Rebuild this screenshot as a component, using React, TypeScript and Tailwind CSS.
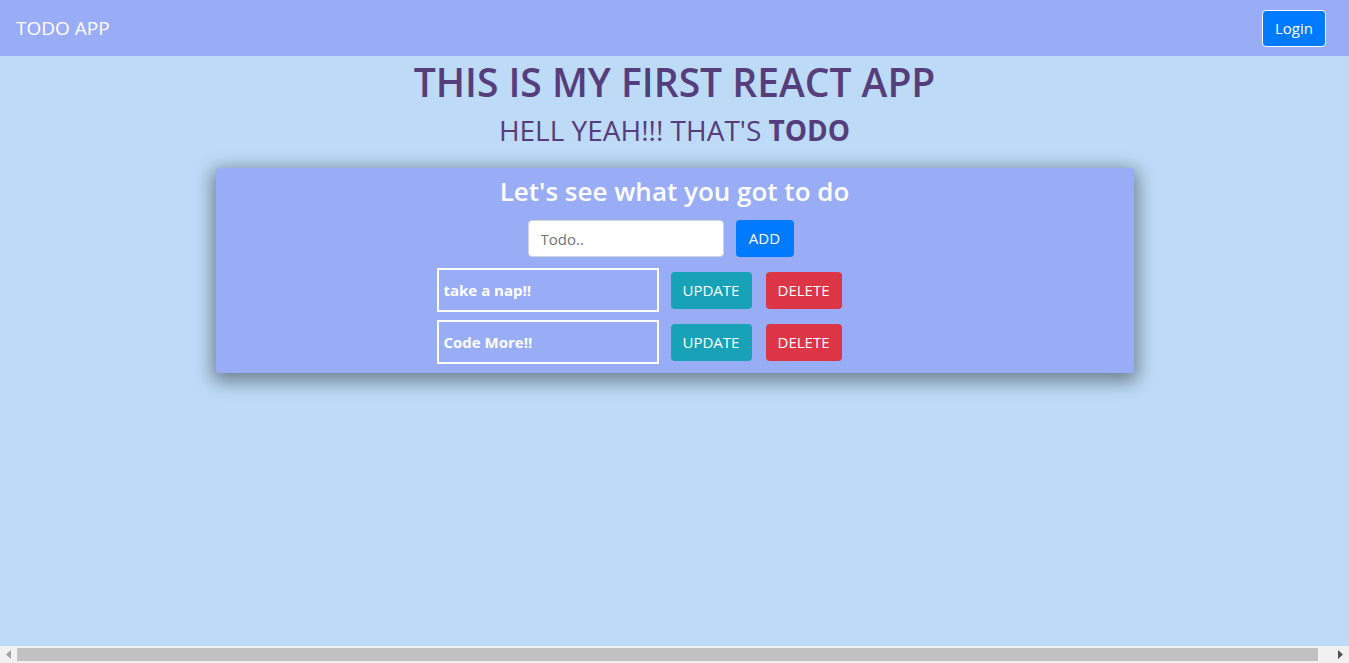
import { useState } from "react"

type Todo = { id: number; text: string }

export default function App() {
  const [todos] = useState<Todo[]>([
    { id: 1, text: "take a nap!!" },
    { id: 2, text: "Code More!!" },
  ])
  const [value, setValue] = useState("")

  return (
    <div className="h-screen flex flex-col bg-[#bddbf7] font-['Open_Sans',sans-serif] overflow-hidden">

      <nav className="h-[56px] bg-[#99adf7] flex items-center justify-between pl-4 pr-[23px] shrink-0">
        <span className="text-white text-[19px] leading-none">TODO APP</span>
        <button className="h-[37px] px-3 rounded border border-white bg-[#007bff] text-white text-[15px]">
          Login
        </button>
      </nav>

      <main className="flex-1 flex flex-col items-center">
        <h1 className="mt-[2px] text-[39px] leading-[48px] font-semibold text-[#563d7c]">
          THIS IS MY FIRST REACT APP
        </h1>
        <h3 className="mt-[7px] text-[28px] leading-[34px] font-normal text-[#563d7c]">
          HELL YEAH!!! THAT'S <b className="font-bold">TODO</b>
        </h3>

        <div className="mt-[21px] w-[918px] bg-[#99adf7] rounded-sm shadow-[0_5px_18px_4px_rgba(0,0,0,0.4)] pt-[5px] pb-[9px]">
          <h3 className="text-center text-white text-[26px] leading-[36px] font-semibold">
            Let's see what you got to do
          </h3>

          <div className="mt-[11px] flex justify-center gap-3">
            <input
              value={value}
              onChange={e => setValue(e.target.value)}
              placeholder="Todo.."
              className="w-[196px] h-[37px] rounded border border-[#ced4da] bg-white px-3 text-[15px] text-[#495057] placeholder:text-[#6c757d] outline-none"
            />
            <button className="w-[58px] h-[37px] rounded bg-[#007bff] text-white text-[15px] mr-[28px]">
              ADD
            </button>
          </div>

          <div className="mt-[11px] flex flex-col gap-2">
            {todos.map(todo => (
              <div key={todo.id} className="flex justify-center items-center">
                <div className="w-[222px] h-[44px] border-2 border-white flex items-center px-[5px] text-white text-[15px] font-bold">
                  {todo.text}
                </div>
                <button className="ml-3 w-[81px] h-[37px] rounded bg-[#17a2b8] text-white text-[15px]">
                  UPDATE
                </button>
                <button className="ml-[14px] mr-[71px] w-[76px] h-[37px] rounded bg-[#dc3545] text-white text-[15px]">
                  DELETE
                </button>
              </div>
            ))}
          </div>
        </div>
      </main>

      <div className="h-[17px] bg-[#f1f1f1] flex items-center shrink-0">
        <div className="w-[17px] flex justify-center">
          <svg width="5" height="9" viewBox="0 0 5 9"><path d="M5 0L0 4.5L5 9Z" fill="#a3a3a3" /></svg>
        </div>
        <div className="w-[1301px] h-[13px] bg-[#c1c1c1]" />
        <div className="flex-1 flex justify-end pr-[6px]">
          <svg width="5" height="9" viewBox="0 0 5 9"><path d="M0 0L5 4.5L0 9Z" fill="#505050" /></svg>
        </div>
      </div>

    </div>
  )
}
